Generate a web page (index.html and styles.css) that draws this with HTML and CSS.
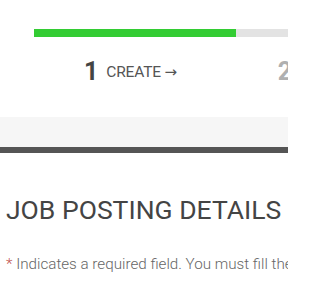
FILE: index.html
```html
<!DOCTYPE html>
<html>
<head>
<meta charset="utf-8">
<link rel="stylesheet" href="styles.css">
</head>
<body>
<div class="page">
  <div class="wizard">
    <div class="progress"><div class="progress-fill" style="width:202px"></div></div>
    <div class="steps">
      <div class="step active"><span class="num">1</span><span class="label">CREATE <span class="arrow">&rarr;</span></span></div>
      <div class="step"><span class="num">2</span></div>
    </div>
  </div>
  <div class="band"></div>
  <div class="content">
    <h1 class="title">JOB POSTING DETAILS</h1>
    <p class="note"><span class="req">*</span> Indicates a required field. You must fill these in.</p>
  </div>
</div>
</body>
</html>
```
FILE: styles.css
```css
html, body {
  margin: 0;
  padding: 0;
  background: #fff;
  font-family: Roboto, "Liberation Sans", sans-serif;
}
.page {
  width: 288px;
  height: 288px;
  overflow: hidden;
}
.wizard {
  padding-top: 29px;
  padding-left: 34px;
  height: 117px;
  box-sizing: border-box;
}
.progress {
  height: 8px;
  background: #e3e3e3;
}
.progress-fill {
  height: 100%;
  background: #33cc33;
}
.steps {
  display: flex;
  align-items: center;
  margin-top: 20px;
  padding-left: 50px;
  white-space: nowrap;
}
.step {
  display: flex;
  align-items: center;
  gap: 8px;
  flex: none;
}
.step + .step {
  margin-left: 101px;
}
.num {
  font-size: 25px;
  font-weight: 700;
  color: #444;
}
.label {
  font-size: 15.5px;
  color: #555;
  letter-spacing: -0.2px;
}
.arrow {
  font-family: "DejaVu Sans", sans-serif;
  font-size: 15px;
}
.step:not(.active) .num {
  color: #b0b0b0;
}
.band {
  height: 30px;
  background: #f6f6f6;
  border-bottom: 6px solid #555;
}
.content {
  padding-left: 6px;
  white-space: nowrap;
}
.title {
  margin: 40px 0 0;
  font-size: 26.5px;
  font-weight: 400;
  color: #444;
  line-height: 34px;
}
.note {
  margin: 28px 0 0;
  font-size: 15.2px;
  font-weight: 300;
  color: #666;
}
.req {
  color: #c0504d;
}
```
